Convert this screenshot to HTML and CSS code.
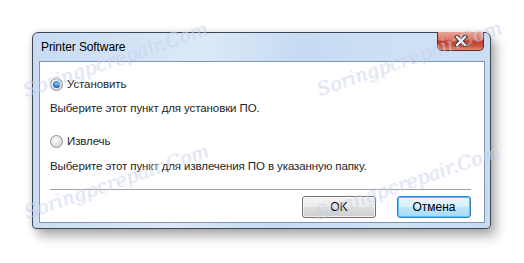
FILE: index.html
```html
<!DOCTYPE html>
<html lang="ru">
<head>
  <meta charset="UTF-8" />
  <meta name="viewport" content="width=device-width, initial-scale=1.0"/>
  <title>Printer Software</title>
  <link rel="stylesheet" href="styles.css">
</head>
<body>
  <div class="page">
    <div class="window">
      <div class="titlebar">
        <span class="title">Printer Software</span>
        <button class="close" aria-label="Закрыть">
          <svg width="18" height="12" viewBox="0 0 18 12">
            <path d="M5 2 L13 10 M13 2 L5 10" stroke="#3b3b3b" stroke-width="4.2" stroke-linecap="square"/>
            <path d="M5 2 L13 10 M13 2 L5 10" stroke="#ffffff" stroke-width="2.2" stroke-linecap="square"/>
          </svg>
        </button>
      </div>
      <main class="client">
        <label class="option option-first">
          <span class="radio checked"></span>
          <span>Установить</span>
        </label>
        <p class="hint hint-first">Выберите этот пункт для установки ПО.</p>
        <label class="option option-second">
          <span class="radio"></span>
          <span>Извлечь</span>
        </label>
        <p class="hint hint-second">Выберите этот пункт для извлечения ПО в указанную папку.</p>
        <hr class="separator">
        <div class="actions">
          <button class="btn">OK</button>
          <button class="btn btn-default">Отмена</button>
        </div>
      </main>
    </div>

    <!-- watermark stamps over the dialog -->
    <span class="stamp stamp-tl">Soringpcrepair.Com</span>
    <span class="stamp stamp-tr">Soringpcrepair.Com</span>
    <span class="stamp stamp-bl">Soringpcrepair.Com</span>
    <span class="stamp stamp-br">Soringpcrepair.Com</span>
  </div>
</body>
</html>
```

FILE: styles.css
```css
:root {
  --frame: #c6dbf2;
  --frame-light: #dce9f8;
  --frame-edge: #3d4652;
  --text: #1e1e1e;
  --client-edge: #8195ad;
}

* {
  box-sizing: border-box;
}

body {
  margin: 0;
  background: #ffffff;
  font-family: 'Liberation Sans', Arial, sans-serif;
  font-size: 11.5px;
  letter-spacing: -0.1px;
  color: var(--text);
}

.page {
  position: relative;
  width: 524px;
  height: 263px;
  padding: 32px 0 0 32px;
  overflow: hidden;
}

.window {
  width: 459px;
  height: 197px;
  border: 1px solid var(--frame-edge);
  border-radius: 6px 6px 4px 4px;
  background: linear-gradient(100deg, var(--frame) 0%, var(--frame-light) 35%, var(--frame) 55%, #cfe1f5 80%, var(--frame) 100%);
  box-shadow: 5px 7px 12px rgba(0, 0, 0, 0.32), 0 0 6px rgba(0, 0, 0, 0.12);
  display: flex;
  flex-direction: column;
}

.titlebar {
  height: 28px;
  display: flex;
  justify-content: space-between;
  align-items: flex-start;
}

.title {
  padding: 7px 0 0 8px;
  font-size: 12px;
  color: #000;
}

.close {
  width: 47px;
  height: 19px;
  margin-right: 6px;
  margin-top: -1px;
  padding: 0;
  border: 1px solid #5a2a23;
  border-top: none;
  border-radius: 0 0 5px 5px;
  background: linear-gradient(180deg, #e8a493 0%, #d97e69 40%, #c2402a 50%, #c9503a 75%, #e08a76 100%);
  display: flex;
  justify-content: center;
  align-items: center;
}

.client {
  flex: 1;
  margin: 0 5px 5px 6px;
  background: #ffffff;
  border: 1px solid var(--client-edge);
  padding: 0 13px 0 10px;
  display: flex;
  flex-direction: column;
}

.option {
  display: flex;
  align-items: center;
  gap: 4px;
  height: 15px;
  line-height: 15px;
}

.option-first {
  margin-top: 15px;
}

.option-second {
  margin-top: 18px;
}

.hint {
  margin: 0;
  line-height: 15px;
}

.hint-first {
  margin-top: 9px;
}

.hint-second {
  margin-top: 10px;
}

.radio {
  width: 13px;
  height: 13px;
  border-radius: 50%;
  border: 1px solid #8e8f8f;
  background: radial-gradient(circle at 40% 35%, #ffffff 0%, #e8e8e8 45%, #c9c9c9 100%);
  display: flex;
  justify-content: center;
  align-items: center;
}

.radio.checked::after {
  content: "";
  width: 7px;
  height: 7px;
  border-radius: 50%;
  background: radial-gradient(circle at 45% 40%, #8fd0ff 0%, #2d7fd3 45%, #0a3f86 100%);
}

.separator {
  margin: 15px 0 0 0;
  border: none;
  border-top: 1px solid #a0a0a0;
}

.actions {
  margin-top: 6px;
  display: flex;
  justify-content: flex-end;
  gap: 21px;
}

.btn {
  width: 74px;
  height: 22px;
  padding: 0;
  font-family: inherit;
  font-size: 12px;
  color: #000;
  border: 1px solid #707070;
  border-radius: 3px;
  background: linear-gradient(180deg, #f3f3f3 0%, #ebebeb 48%, #dddddd 52%, #cfcfcf 100%);
  box-shadow: inset 0 0 0 1px rgba(255, 255, 255, 0.7);
}

.btn-default {
  border-color: #3c7fb1;
  background: linear-gradient(180deg, #eaf6fd 0%, #d9f0fc 48%, #bee6fd 52%, #a7d9f5 100%);
  box-shadow: inset 0 0 0 1px #4fc2ff;
}

.stamp {
  position: absolute;
  width: 186px;
  height: 24px;
  text-align: center;
  font-family: 'DejaVu Serif', serif;
  font-style: italic;
  font-size: 19px;
  letter-spacing: 0;
  line-height: 24px;
  color: rgba(210, 216, 242, 0.5);
  text-shadow: 1px 1px 0 rgba(170, 180, 220, 0.25);
  transform: rotate(-19deg);
  pointer-events: none;
}

.stamp-tl {
  left: 18px;
  top: 48px;
}

.stamp-tr {
  left: 312px;
  top: 47px;
}

.stamp-bl {
  left: 19px;
  top: 170px;
}

.stamp-br {
  left: 310px;
  top: 171px;
}
```
